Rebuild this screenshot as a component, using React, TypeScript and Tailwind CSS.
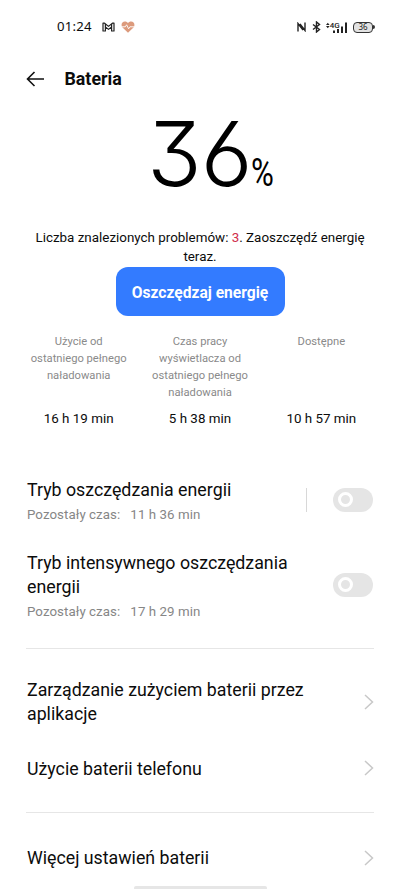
import type { ReactNode } from "react"

interface UsageStat {
  label: string
  value: string
}

const stats: UsageStat[] = [
  { label: "Użycie od ostatniego pełnego naładowania", value: "16 h 19 min" },
  { label: "Czas pracy wyświetlacza od ostatniego pełnego naładowania", value: "5 h 38 min" },
  { label: "Dostępne", value: "10 h 57 min" },
]

function StatusBar() {
  return (
    <div className="flex h-[54px] shrink-0 items-center pl-[57px] pr-[25px]">
      <span className="font-['Noto_Sans'] text-[13.2px] tracking-[0.2px]">01:24</span>
      <svg className="ml-[10px]" width="13" height="10" viewBox="0 0 13 10" fill="none" stroke="#222" strokeWidth="1.2" strokeLinejoin="round">
        <path d="M1 9V1.2h1.6L6.5 4.4 10.4 1.2H12V9H9.6V5L6.5 7.4 3.4 5V9z" />
        <path d="M3.4 5V2M9.6 5V2" />
      </svg>
      <svg className="ml-[6px]" width="14" height="12" viewBox="0 0 14 12">
        <path d="M7 11.8 1.5 6.4C-1.3 3 2.6-1.7 7 1.9 11.4-1.7 15.3 3 12.5 6.4z" fill="#dc9a7c" />
        <path d="M1 5.8h3.3l1.3-2 2 4 1.3-2H13" fill="none" stroke="#fff" strokeWidth="0.9" />
      </svg>

      <div className="ml-auto flex items-center">
        <svg width="9" height="10" viewBox="0 0 9 10" fill="none" stroke="#222" strokeWidth="1.4">
          <path d="M1 9.5V1.5L6 8.2M8 .5v8L3 1.8" />
        </svg>
        <svg className="ml-[6px]" width="9" height="12" viewBox="0 0 9 12" fill="none" stroke="#222" strokeWidth="1.4">
          <path d="m1 3.5 6.5 5-3 2.5V1l3 2.5L1 8.5" />
        </svg>
        <svg className="ml-[5px]" width="22" height="13" viewBox="0 0 22 13">
          <path d="M0 4 1.8 1.8l1.8 2.2zM0 5h3.6L1.8 7.2z" fill="#222" />
          <text x="3.8" y="7" className="font-['Roboto'] text-[8px] font-medium" fill="#222">4G</text>
          <path d="M7 9.5h2V12H7zM11 8h2v4h-2zM15 5.500h2V12h-2zM19 1.500h2V12h-2z" fill="#222" />
        </svg>
        <div className="ml-[5px] flex items-center">
          <div className="flex h-[11px] w-[20px] items-center justify-center rounded-[4px] border border-[#333] bg-[#e2e2e2] font-['Noto_Sans'] text-[8px] leading-none text-[#222]">
            36
          </div>
          <div className="h-[4px] w-[2px] rounded-r bg-[#333]" />
        </div>
      </div>
    </div>
  )
}

function Switch() {
  return (
    <button className="-mt-[3px] flex h-[24px] w-[40px] shrink-0 items-center rounded-full bg-[#e5e5e5] pl-[5px]">
      <span className="size-[15px] rounded-full border-[3px] border-white" />
    </button>
  )
}

function Chevron() {
  return (
    <svg className="-mt-px shrink-0" width="10" height="16" viewBox="0 0 10 16" fill="none" stroke="#c8c8c8" strokeWidth="1.5">
      <path d="M1 1l7.5 7L1 15" />
    </svg>
  )
}

function ModeRow({ title, time, children }: { title: string; time: string; children: ReactNode }) {
  return (
    <div className="flex items-center justify-between">
      <div className="w-[278px]">
        <div className="text-[17.8px] leading-[24.5px]">{title}</div>
        <div className="mt-[2px] whitespace-pre text-[13.3px] leading-[20px] tracking-[0.06px] text-[#868686]">
          Pozostały czas:{"   "}{time}
        </div>
      </div>
      {children}
    </div>
  )
}

function LinkRow({ title }: { title: string }) {
  return (
    <div className="flex items-center justify-between">
      <div className="w-[300px] text-[17.75px] leading-[24.5px]">{title}</div>
      <Chevron />
    </div>
  )
}

export default function App() {
  return (
    <div className="flex h-[889px] w-[400px] flex-col overflow-hidden bg-white font-['Roboto',sans-serif] text-[#0c0c0c]">
      <StatusBar />

      <header className="flex h-[50px] shrink-0 items-center pl-[26px]">
        <svg width="18" height="16" viewBox="0 0 18 16" fill="none" stroke="#111" strokeWidth="1.6">
          <path d="M18 8H1.5M8.5 1l-7 7 7 7" />
        </svg>
        <h1 className="ml-[20.5px] text-[17.8px] font-bold">Bateria</h1>
      </header>

      <div className="flex h-[125px] shrink-0 items-baseline pl-[147px] text-black">
        <span className="font-['Inter'] text-[90px] font-light leading-[100px] tracking-[-1px] [font-feature-settings:'cv03','cv09']">36</span>
        <span className="-ml-px origin-left scale-x-[0.82] text-[38px] leading-none">%</span>
      </div>

      <p className="px-[30px] text-center text-[13.4px] leading-[18.5px]">
        Liczba znalezionych problemów: <span className="text-[#d0304c]">3</span>. Zaoszczędź energię teraz.
      </p>
      <button className="mx-auto mt-px h-[49px] w-[169px] shrink-0 rounded-[12px] bg-[#337bff] pt-[4px] text-[15.6px] font-bold text-white">
        Oszczędzaj energię
      </button>

      <div className="mt-[17px] grid grid-cols-3 px-[18px] text-center">
        {stats.map((stat) => (
          <div key={stat.label} className="flex h-[96px] flex-col justify-between">
            <div className="px-[10px] text-[11.2px] leading-[17px] text-[#8a8a8a]">{stat.label}</div>
            <div className="text-[13.4px] leading-[20px]">{stat.value}</div>
          </div>
        ))}
      </div>

      <div className="mt-[49px] flex flex-col gap-[26px] pl-[27px] pr-[27px]">
        <ModeRow title="Tryb oszczędzania energii" time="11 h 36 min">
          <div className="flex items-center gap-[26px]">
            <div className="-mt-[2px] h-[24px] w-px bg-[#d8d8d8]" />
            <Switch />
          </div>
        </ModeRow>
        <ModeRow title="Tryb intensywnego oszczędzania energii" time="17 h 29 min">
          <Switch />
        </ModeRow>
      </div>

      <div className="mx-[26px] mt-[26px] h-px shrink-0 bg-[#e6e6e6]" />

      <div className="mt-[29px] flex flex-col gap-[30px] pl-[27px] pr-[26px]">
        <LinkRow title="Zarządzanie zużyciem baterii przez aplikacje" />
        <LinkRow title="Użycie baterii telefonu" />
      </div>

      <div className="mx-[26px] mt-[31px] h-px shrink-0 bg-[#e6e6e6]" />

      <div className="mt-[33px] pl-[27px] pr-[26px]">
        <LinkRow title="Więcej ustawień baterii" />
      </div>

      <div className="mx-auto mt-[15px] h-[4px] w-[133px] shrink-0 rounded-full bg-[#e6e6e6]" />
    </div>
  )
}
